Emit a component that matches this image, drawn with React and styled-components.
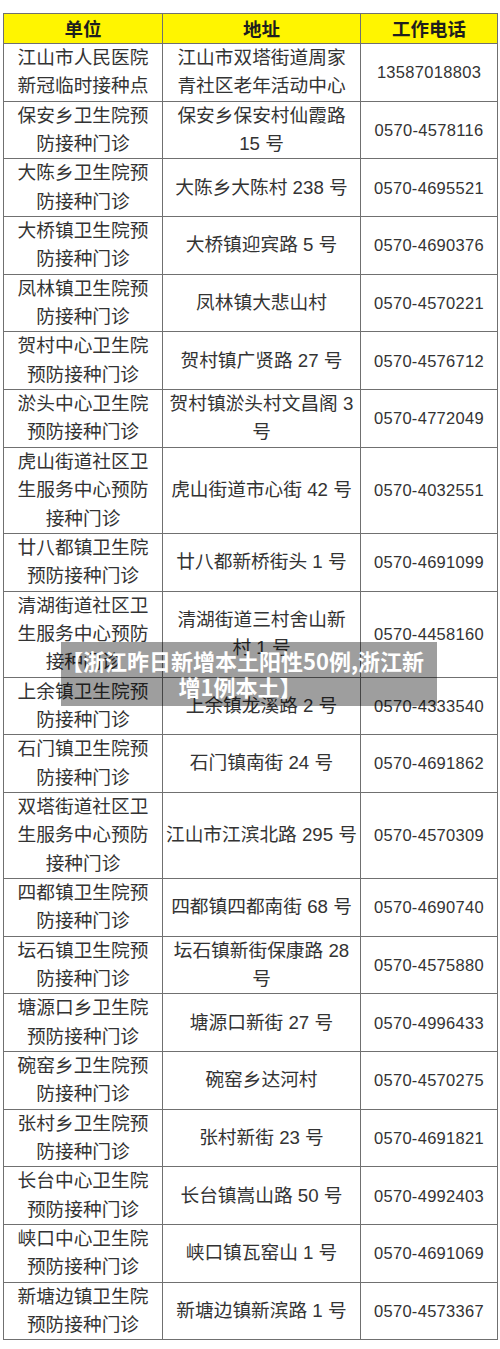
import React from "react";
import styled, { createGlobalStyle } from "styled-components";

const rows = [
  [["江山市人民医院", "新冠临时接种点"], ["江山市双塔街道周家", "青社区老年活动中心"], "13587018803"],
  [["保安乡卫生院预", "防接种门诊"], ["保安乡保安村仙霞路", "15 号"], "0570-4578116"],
  [["大陈乡卫生院预", "防接种门诊"], ["大陈乡大陈村 238 号"], "0570-4695521"],
  [["大桥镇卫生院预", "防接种门诊"], ["大桥镇迎宾路 5 号"], "0570-4690376"],
  [["凤林镇卫生院预", "防接种门诊"], ["凤林镇大悲山村"], "0570-4570221"],
  [["贺村中心卫生院", "预防接种门诊"], ["贺村镇广贤路 27 号"], "0570-4576712"],
  [["淤头中心卫生院", "预防接种门诊"], ["贺村镇淤头村文昌阁 3", "号"], "0570-4772049"],
  [["虎山街道社区卫", "生服务中心预防", "接种门诊"], ["虎山街道市心街 42 号"], "0570-4032551"],
  [["廿八都镇卫生院", "预防接种门诊"], ["廿八都新桥街头 1 号"], "0570-4691099"],
  [["清湖街道社区卫", "生服务中心预防", "接种门诊"], ["清湖街道三村舍山新", "村 1 号"], "0570-4458160"],
  [["上余镇卫生院预", "防接种门诊"], ["上余镇龙溪路 2 号"], "0570-4333540"],
  [["石门镇卫生院预", "防接种门诊"], ["石门镇南街 24 号"], "0570-4691862"],
  [["双塔街道社区卫", "生服务中心预防", "接种门诊"], ["江山市江滨北路 295 号"], "0570-4570309"],
  [["四都镇卫生院预", "防接种门诊"], ["四都镇四都南街 68 号"], "0570-4690740"],
  [["坛石镇卫生院预", "防接种门诊"], ["坛石镇新街保康路 28", "号"], "0570-4575880"],
  [["塘源口乡卫生院", "预防接种门诊"], ["塘源口新街 27 号"], "0570-4996433"],
  [["碗窑乡卫生院预", "防接种门诊"], ["碗窑乡达河村"], "0570-4570275"],
  [["张村乡卫生院预", "防接种门诊"], ["张村新街 23 号"], "0570-4691821"],
  [["长台中心卫生院", "预防接种门诊"], ["长台镇嵩山路 50 号"], "0570-4992403"],
  [["峡口中心卫生院", "预防接种门诊"], ["峡口镇瓦窑山 1 号"], "0570-4691069"],
  [["新塘边镇卫生院", "预防接种门诊"], ["新塘边镇新滨路 1 号"], "0570-4573367"],
];

const App = () => {
  return (
    <Page>
      <GlobalStyle />
      <Table>
        <colgroup>
          <col style={{ width: 159 }} />
          <col style={{ width: 198 }} />
          <col style={{ width: 137 }} />
        </colgroup>
        <thead>
          <tr>
            <Head>单位</Head>
            <Head>地址</Head>
            <Head>工作电话</Head>
          </tr>
        </thead>
        <tbody>
          {rows.map(([unit, addr, phone]) => (
            <tr key={phone}>
              <Cell>
                {unit.map((line) => (
                  <Line key={line}>{line}</Line>
                ))}
              </Cell>
              <Cell>
                {addr.map((line) => (
                  <Line key={line}>{line}</Line>
                ))}
              </Cell>
              <Cell phone>{phone}</Cell>
            </tr>
          ))}
        </tbody>
      </Table>
      <Caption>
        【浙江昨日新增本土阳性50例,浙江新
        <br />
        增1例本土】
      </Caption>
    </Page>
  );
};

export default App;

const GlobalStyle = createGlobalStyle`
  html, body {
    margin: 0;
    padding: 0;
    background: #ffffff;
  }
`;

const Page = styled.div`
  position: relative;
  width: 500px;
  min-height: 1349px;
  padding: 13px 3px 0;
  box-sizing: border-box;
  font-family: "Liberation Sans", "Noto Sans CJK SC", sans-serif;
`;

const Table = styled.table`
  width: 494px;
  table-layout: fixed;
  border-collapse: collapse;
  border: 1px solid #707070;
`;

const Head = styled.th`
  height: 29px;
  padding: 0;
  background: #fff500;
  border: 1px solid #707070;
  color: #1e1e1e;
  font-family: "Noto Sans CJK SC", sans-serif;
  font-size: 18.5px;
  font-weight: 700;
  line-height: 29px;
  text-align: center;
`;

const Cell = styled.td`
  padding: 0;
  border: 1px solid #707070;
  color: #333333;
  font-size: ${({ phone }) => (phone ? "16.5px" : "18.7px")};
  letter-spacing: ${({ phone }) => (phone ? "0.3px" : "0")};
  line-height: 28.35px;
  text-align: center;
  vertical-align: middle;
  white-space: nowrap;
`;

const Line = styled.div`
  line-height: 28.35px;
`;

const Caption = styled.div`
  position: absolute;
  left: 61px;
  top: 642px;
  width: 376px;
  height: 64px;
  padding: 5px 18px 0 0;
  box-sizing: border-box;
  background: rgba(0, 0, 0, 0.38);
  color: #ffffff;
  font-family: "Noto Sans CJK SC", sans-serif;
  font-size: 22px;
  font-weight: 700;
  line-height: 26px;
  text-align: center;
  white-space: nowrap;
`;
